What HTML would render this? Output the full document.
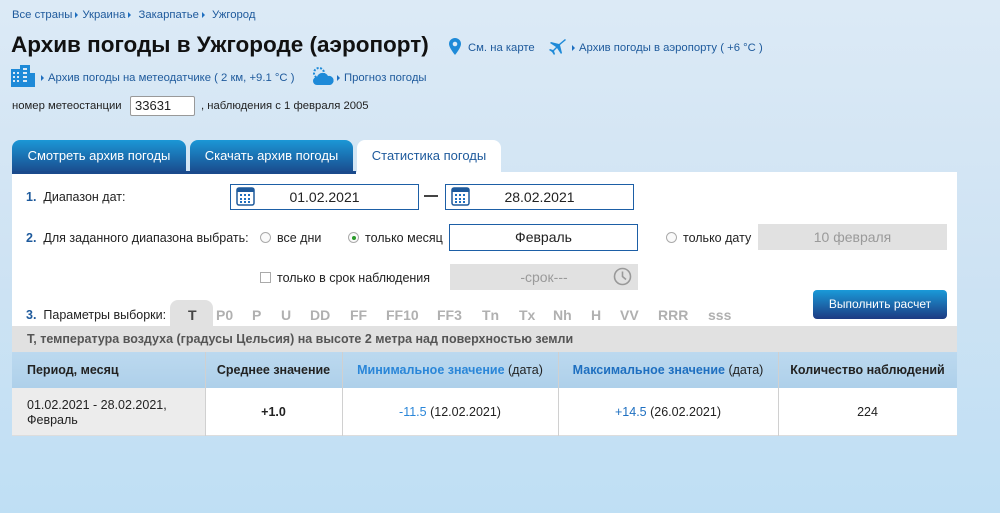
<!DOCTYPE html>
<html><head><meta charset="utf-8"><style>
*{margin:0;padding:0;box-sizing:border-box}
body{width:1000px;height:513px;overflow:hidden;font-family:"Liberation Sans","DejaVu Sans",sans-serif;font-size:12px;color:#222;background:linear-gradient(#dceaf6 0,#cfe3f3 250px,#bfdff4 513px);position:relative}
.a{position:absolute;white-space:nowrap}
.hd{font-size:11.3px}
.lnk{color:#1e5a9c}
.tri{display:inline-block;width:0;height:0;border-left:3px solid #1e6fc0;border-top:3px solid transparent;border-bottom:3px solid transparent;margin:0 4px 1px 3px;vertical-align:middle}
.tab{position:absolute;top:140px;height:33px;color:#fff;font-size:13px;text-align:center;line-height:32px;border-radius:8px 8px 0 0;background:linear-gradient(#1b97d6,#1a4a8c)}
.inp{position:absolute;border:1px solid #1d5fa6;background:#fff;font-size:14px;text-align:center;line-height:24px}
.gr{position:absolute;background:#e1e1e1;color:#9a9a9a;font-size:14px;text-align:center;line-height:26px}
.rad{display:inline-block;width:11px;height:11px;border:1px solid #aaa;border-radius:50%;vertical-align:-1px;margin-right:6px;background:#fafafa;position:relative}
.par{position:absolute;top:307px;font-size:14px;font-weight:bold;color:#b0b0b0}
.th{position:absolute;top:352px;height:36px;line-height:36px;font-weight:bold;font-size:12.5px;text-align:center}
.td{position:absolute;top:388px;height:48px;line-height:48px;text-align:center;font-size:12.5px}
.bl{color:#2a86d8}
</style></head><body>
<div class="a lnk hd" style="left:12px;top:9px">Все страны<span class="tri"></span>Украина<span class="tri"></span> Закарпатье<span class="tri"></span> Ужгород</div>
<div class="a" style="left:11px;top:32px;font-size:22.5px;font-weight:bold;color:#111">Архив погоды в Ужгороде (аэропорт)</div>
<svg class="a" style="left:449px;top:38px" width="12" height="17" viewBox="0 0 12 17"><path d="M6 0C2.7 0 0 2.6 0 5.8 0 10 6 17 6 17s6-7 6-11.2C12 2.6 9.3 0 6 0z" fill="#1e8ad8"/><circle cx="6" cy="6" r="2.3" fill="#dceaf6"/></svg>
<div class="a lnk hd" style="left:468px;top:42px">См. на карте</div>
<svg class="a" style="left:549px;top:39px" width="18" height="16" viewBox="0 0 18 16"><path d="M17 1L16 0 10 5 2 3 1 4 7 8 4 11 1 10 0 11 3 13 5 16 6 15 5 12 8 9 12 15 13 14 11 6z" fill="#1e8ad8"/></svg>
<div class="a lnk hd" style="left:569px;top:42px"><span class="tri"></span>Архив погоды в аэропорту ( +6 °C )</div>
<svg class="a" style="left:11px;top:63px" width="24" height="24" viewBox="0 0 24 24"><rect x="0" y="6" width="11" height="18" fill="#1e8ad8"/><rect x="9" y="2" width="10" height="22" fill="#1e8ad8"/><rect x="19" y="10" width="5" height="14" fill="#1e8ad8"/><g fill="#dceaf6"><rect x="2" y="9" width="2" height="2"/><rect x="6" y="9" width="2" height="2"/><rect x="2" y="13" width="2" height="2"/><rect x="6" y="13" width="2" height="2"/><rect x="2" y="17" width="2" height="2"/><rect x="6" y="17" width="2" height="2"/><rect x="12" y="5" width="4" height="2"/><rect x="12" y="9" width="4" height="2"/><rect x="12" y="13" width="4" height="2"/><rect x="12" y="17" width="4" height="2"/></g></svg>
<div class="a lnk hd" style="left:38px;top:72px"><span class="tri"></span>Архив погоды на метеодатчике ( 2 км, +9.1 °C )</div>
<svg class="a" style="left:311px;top:66px" width="24" height="20" viewBox="0 0 24 20"><circle cx="8" cy="7" r="5" fill="none" stroke="#1e8ad8" stroke-width="2" stroke-dasharray="2 1.5"/><path d="M6 19a4 4 0 010-8 6 6 0 0111-1 4.5 4.5 0 012 9z" fill="#1e8ad8"/></svg>
<div class="a lnk hd" style="left:334px;top:72px"><span class="tri"></span>Прогноз погоды</div>
<div class="a hd" style="left:12px;top:100px">номер метеостанции</div>
<div class="a" style="left:130px;top:96px;width:65px;height:20px;border:1px solid #999;background:#fff;border-radius:2px;font-size:13px;padding:1px 4px">33631</div>
<div class="a hd" style="left:201px;top:100px">, наблюдения с 1 февраля 2005</div>
<div class="tab" style="left:12px;width:174px">Смотреть архив погоды</div>
<div class="tab" style="left:190px;width:163px">Скачать архив погоды</div>
<div class="tab" style="left:357px;width:144px;background:#fff;color:#1e5a9c">Статистика погоды</div>
<div class="a" style="left:12px;top:172px;width:945px;height:264px;background:#fff"></div>
<div class="a" style="left:12px;top:171px;width:344px;height:3px;background:#1a4a8c"></div>
<div class="a" style="left:26px;top:190px;font-size:12.5px"><b style="color:#1e5a9c">1.</b>&nbsp; Диапазон дат:</div>
<div class="a" style="left:26px;top:231px;font-size:12.5px"><b style="color:#1e5a9c">2.</b>&nbsp; Для заданного диапазона выбрать:</div>
<div class="inp" style="left:230px;top:184px;width:189px;height:26px">01.02.2021</div>
<div class="a" style="left:424px;top:195px;width:14px;height:2px;background:#444"></div>
<div class="inp" style="left:445px;top:184px;width:189px;height:26px">28.02.2021</div>
<svg class="a" style="left:236px;top:187px" width="19" height="19" viewBox="0 0 19 19"><rect x="1" y="1" width="17" height="17" rx="2" fill="#fff" stroke="#1e5a9c" stroke-width="1.5"/><rect x="1" y="1" width="17" height="4" fill="#1e5a9c"/><g fill="#1e6fc0"><rect x="4" y="7" width="2" height="2"/><rect x="8" y="7" width="2" height="2"/><rect x="12" y="7" width="2" height="2"/><rect x="4" y="11" width="2" height="2"/><rect x="8" y="11" width="2" height="2"/><rect x="12" y="11" width="2" height="2"/><rect x="4" y="14" width="2" height="2"/><rect x="8" y="14" width="2" height="2"/><rect x="12" y="14" width="2" height="2"/></g></svg>
<svg class="a" style="left:451px;top:187px" width="19" height="19" viewBox="0 0 19 19"><rect x="1" y="1" width="17" height="17" rx="2" fill="#fff" stroke="#1e5a9c" stroke-width="1.5"/><rect x="1" y="1" width="17" height="4" fill="#1e5a9c"/><g fill="#1e6fc0"><rect x="4" y="7" width="2" height="2"/><rect x="8" y="7" width="2" height="2"/><rect x="12" y="7" width="2" height="2"/><rect x="4" y="11" width="2" height="2"/><rect x="8" y="11" width="2" height="2"/><rect x="12" y="11" width="2" height="2"/><rect x="4" y="14" width="2" height="2"/><rect x="8" y="14" width="2" height="2"/><rect x="12" y="14" width="2" height="2"/></g></svg>
<div class="a" style="left:260px;top:231px;font-size:12.5px"><span class="rad"></span>все дни</div>
<div class="a" style="left:348px;top:231px;font-size:12.5px"><span class="rad"><span style="position:absolute;left:3px;top:3px;width:4px;height:4px;border-radius:50%;background:#2a9a2a"></span></span>только месяц</div>
<div class="inp" style="left:449px;top:224px;width:189px;height:27px">Февраль</div>
<div class="a" style="left:666px;top:231px;font-size:12.5px"><span class="rad"></span>только дату</div>
<div class="gr" style="left:758px;top:224px;width:189px">10 февраля</div>
<div class="a" style="left:260px;top:271px;font-size:12.5px"><span style="display:inline-block;width:11px;height:11px;border:1px solid #aaa;vertical-align:-1px;margin-right:6px"></span>только в срок наблюдения</div>
<div class="gr" style="left:450px;top:264px;width:188px">-срок---</div>
<svg class="a" style="left:613px;top:267px" width="19" height="19" viewBox="0 0 19 19"><circle cx="9.5" cy="9.5" r="8" fill="none" stroke="#999" stroke-width="1.6"/><path d="M9.5 4.5v5l3.5 3" fill="none" stroke="#999" stroke-width="1.6"/></svg>
<div class="a" style="left:26px;top:308px;font-size:12.5px"><b style="color:#1e5a9c">3.</b>&nbsp; Параметры выборки:</div>
<div class="a" style="left:170px;top:300px;width:43px;height:27px;background:#e1e1e1;border-radius:8px 8px 0 0"></div>
<div class="par" style="left:188px;color:#444">T</div>
<div class="par" style="left:216px">P0</div>
<div class="par" style="left:252px">P</div>
<div class="par" style="left:281px">U</div>
<div class="par" style="left:310px">DD</div>
<div class="par" style="left:350px">FF</div>
<div class="par" style="left:386px">FF10</div>
<div class="par" style="left:437px">FF3</div>
<div class="par" style="left:482px">Tn</div>
<div class="par" style="left:519px">Tx</div>
<div class="par" style="left:553px">Nh</div>
<div class="par" style="left:591px">H</div>
<div class="par" style="left:620px">VV</div>
<div class="par" style="left:658px">RRR</div>
<div class="par" style="left:708px">sss</div>
<div class="a" style="left:813px;top:290px;width:134px;height:29px;border-radius:4px;background:linear-gradient(#1a9ad8,#1d3a82);color:#fff;text-align:center;line-height:28px;font-size:12px">Выполнить расчет</div>
<div class="a" style="left:12px;top:326px;width:945px;height:26px;background:#e1e1e1;color:#555;font-weight:bold;font-size:12.5px;line-height:26px;padding-left:15px">T, температура воздуха (градусы Цельсия) на высоте 2 метра над поверхностью земли</div>
<div class="a" style="left:12px;top:352px;width:945px;height:36px;background:linear-gradient(#bcd9ef,#aed0ea)"></div>
<div class="a" style="left:12px;top:388px;width:193px;height:48px;background:#ececec"></div>
<div class="a" style="left:12px;top:435px;width:945px;height:1px;background:#ddd"></div>
<div class="a" style="left:205px;top:352px;width:1px;height:84px;background:#d0d0d0"></div>
<div class="a" style="left:342px;top:352px;width:1px;height:84px;background:#d0d0d0"></div>
<div class="a" style="left:558px;top:352px;width:1px;height:84px;background:#d0d0d0"></div>
<div class="a" style="left:778px;top:352px;width:1px;height:84px;background:#d0d0d0"></div>
<div class="th" style="left:27px;text-align:left">Период, месяц</div>
<div class="th" style="left:205px;width:137px">Среднее значение</div>
<div class="th" style="left:342px;width:216px;font-weight:normal"><b class="bl">Минимальное значение</b> (дата)</div>
<div class="th" style="left:558px;width:220px;font-weight:normal"><b style="color:#1e6fc0">Максимальное значение</b> (дата)</div>
<div class="th" style="left:778px;width:179px">Количество наблюдений</div>
<div class="a" style="left:27px;top:398px;font-size:12.5px;line-height:15px">01.02.2021 - 28.02.2021,<br>Февраль</div>
<div class="td" style="left:205px;width:137px;font-weight:bold">+1.0</div>
<div class="td" style="left:342px;width:216px"><span class="bl">-11.5</span> (12.02.2021)</div>
<div class="td" style="left:558px;width:220px"><span style="color:#1e6fc0">+14.5</span> (26.02.2021)</div>
<div class="td" style="left:778px;width:179px">224</div>
</body></html>
